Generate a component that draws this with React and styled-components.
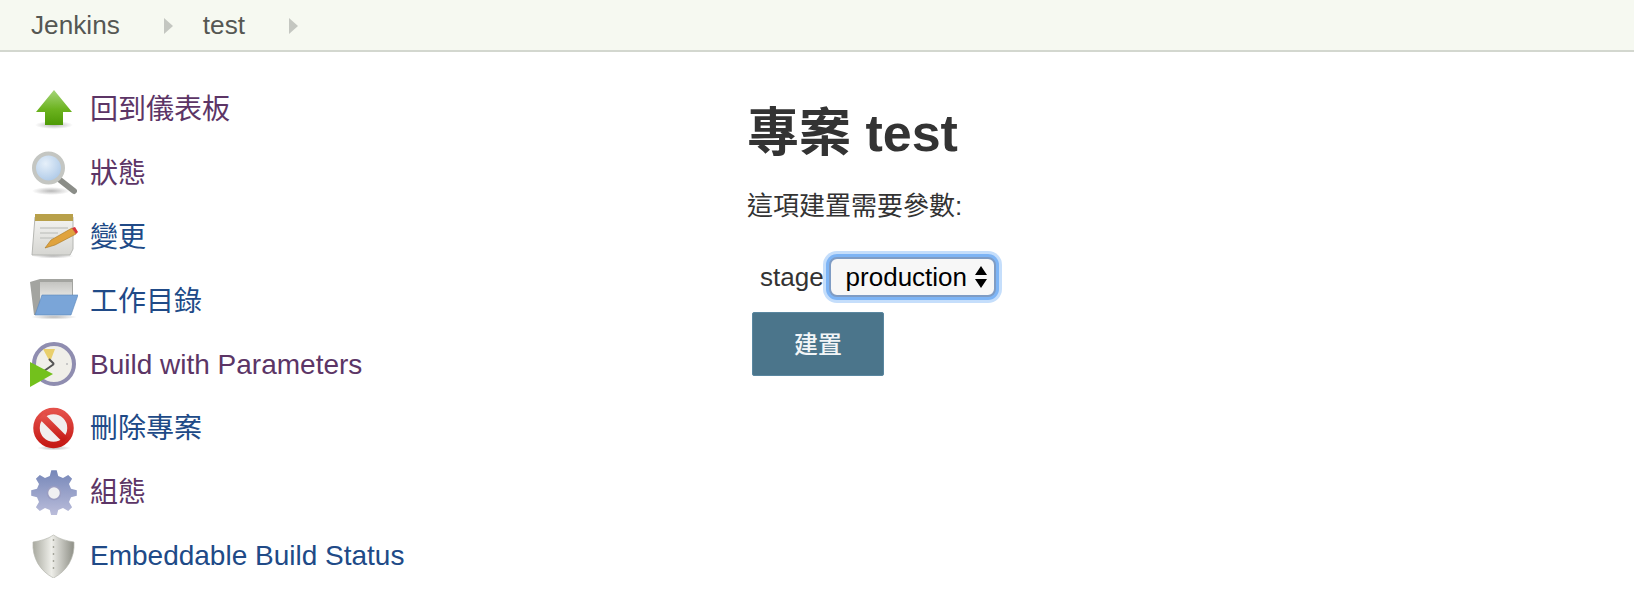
import React from 'react';
import styled, { createGlobalStyle } from 'styled-components';

const FONT = '"Liberation Sans", "Noto Sans CJK TC", sans-serif';

const GlobalStyle = createGlobalStyle`
    html, body {
        margin: 0;
        padding: 0;
        background: #fff;
        overflow: hidden;
    }
    body {
        font-family: ${FONT};
        font-size: 26px;
        color: #333;
    }
`;

const Breadcrumbs = styled.div`
    display: flex;
    align-items: center;
    height: 50px;
    padding-left: 31px;
    background: #f6f9f1;
    border-bottom: 2px solid #d3d7cf;
    color: #555753;
`;

const Crumb = styled.span`
    line-height: 50px;
    margin-right: 44px;
    font-size: 26.2px;
`;

const CrumbArrow = styled.span`
    width: 0;
    height: 0;
    margin-right: 30px;
    margin-top: 2px;
    border-left: 9px solid #c4c7c1;
    border-top: 8px solid transparent;
    border-bottom: 8px solid transparent;
`;

const Layout = styled.div`
    display: flex;
`;

const SidePanel = styled.nav`
    width: 747px;
    padding: 24px 0 0 30px;
    box-sizing: border-box;
`;

const Task = styled.a`
    display: flex;
    align-items: center;
    height: 63.8px;
    font-size: 28px;
    color: ${props => props.$visited ? '#5c3566' : '#204a87'};
    text-decoration: none;
`;

const TaskIcon = styled.svg`
    width: 48px;
    height: 48px;
    flex: none;
    margin-right: 12px;
    filter: blur(0.4px);
`;

// latin labels sit a little lower than the CJK ones in the original font
const TaskLabel = styled.span`
    margin-top: ${props => props.$latin ? '3px' : '-1px'};
`;

const Main = styled.main`
    display: flex;
    flex-direction: column;
    align-items: flex-start;
`;

const Title = styled.h1`
    margin: 49px 0 0;
    font-size: 52px;
    line-height: 64px;
    font-weight: bold;
`;

const Note = styled.p`
    margin: 21px 0 0;
    line-height: 40px;
`;

const ParamRow = styled.div`
    display: flex;
    align-items: center;
    margin: 31px 0 0 13px;
`;

const ParamName = styled.label`
    margin-right: 5px;
`;

const SelectWrap = styled.span`
    position: relative;
    display: block;
    width: 167px;
    height: 40px;
`;

const Select = styled.select`
    display: block;
    width: 100%;
    height: 100%;
    box-sizing: border-box;
    appearance: none;
    margin: 0;
    padding: 0 0 0 15px;
    font-family: ${FONT};
    font-size: 26px;
    color: #000;
    background: #f7f7f7;
    border: 2px solid #7f9cc4;
    border-radius: 8px;
    outline: none;
    box-shadow: 0 0 0 3px #7db4f5, 0 0 0 6px #c5defb;
`;

const SelectArrows = styled.svg`
    position: absolute;
    right: 8px;
    top: 8px;
    width: 14px;
    height: 24px;
    pointer-events: none;
`;

const BuildButton = styled.button`
    width: 132px;
    height: 64px;
    margin: 15px 0 0 5px;
    padding: 0 0 4px;
    font-family: ${FONT};
    font-size: 24px;
    font-weight: 500;
    color: #f2f5f7;
    background: #4b758b;
    border: 1px solid #5a87a0;
    border-radius: 2px;
`;

// builds the gear outline, teeth are simple trapezoids
const gearPath = () => {
    const teeth = 8;
    const pts = [];
    for (let i = 0; i < teeth; i++) {
        const a = (i / teeth) * Math.PI * 2 - Math.PI / 2;
        const step = Math.PI / teeth;
        [[17.5, -0.62], [23, -0.3], [23, 0.3], [17.5, 0.62]].forEach(([r, k]) => {
            const t = a + k * step;
            pts.push(`${(24 + r * Math.cos(t)).toFixed(1)} ${(26 + r * Math.sin(t)).toFixed(1)}`);
        });
    }
    return `M${pts.join(' L')} Z`;
};

const UpIcon = () => (
    <TaskIcon viewBox="0 0 48 48">
        <defs>
            <linearGradient id="upG" x1="0" y1="0" x2="0" y2="1">
                <stop offset="0" stopColor="#a6d57a" />
                <stop offset=".55" stopColor="#6cb31f" />
                <stop offset="1" stopColor="#4e9a06" />
            </linearGradient>
            <radialGradient id="shadowG">
                <stop offset="0" stopColor="#888" stopOpacity=".6" />
                <stop offset="1" stopColor="#888" stopOpacity="0" />
            </radialGradient>
        </defs>
        <ellipse cx="24" cy="41" rx="19" ry="4" fill="url(#shadowG)" />
        <path d="M24 6 L42 28 L33 28 L33 41 L15 41 L15 28 L6 28 Z" fill="url(#upG)" />
    </TaskIcon>
);

const SearchIcon = () => (
    <TaskIcon viewBox="0 0 48 48">
        <defs>
            <radialGradient id="lensG" cx=".4" cy=".35" r=".7">
                <stop offset="0" stopColor="#e6f0fa" />
                <stop offset="1" stopColor="#a9c6e6" />
            </radialGradient>
        </defs>
        <ellipse cx="21" cy="43" rx="19" ry="4" fill="url(#shadowG)" />
        <line x1="30" y1="32" x2="44" y2="43" stroke="#8b8d88" strokeWidth="6" strokeLinecap="round" />
        <circle cx="18.5" cy="20" r="14.5" fill="url(#lensG)" stroke="#c4c6c2" strokeWidth="4" />
    </TaskIcon>
);

const NotepadIcon = () => (
    <TaskIcon viewBox="0 0 48 48">
        <defs>
            <linearGradient id="padG" x1="0" y1="0" x2="0" y2="1">
                <stop offset="0" stopColor="#f4f4f2" />
                <stop offset="1" stopColor="#d6d6d2" />
            </linearGradient>
        </defs>
        <ellipse cx="23" cy="45" rx="21" ry="2.5" fill="url(#shadowG)" />
        <path d="M5 6 H43 V38 L40 44 H2 Z" fill="url(#padG)" stroke="#b5b6b2" />
        <rect x="5" y="3" width="38" height="7" fill="#b8a04a" />
        <path d="M10 17 H38 M10 22 H28 M10 27 H24" stroke="#c8c9c5" strokeWidth="1.6" />
        <path d="M15 37 L21 29 L42 17 L46 23 L25 34 Z" fill="#e0a33e" stroke="#a8761c" strokeWidth=".6" />
        <path d="M42 17 L46 23 L48 21 L45 16 Z" fill="#d8343a" />
    </TaskIcon>
);

const FolderIcon = () => (
    <TaskIcon viewBox="0 0 48 48">
        <defs>
            <linearGradient id="paperG" x1="0" y1="0" x2="0" y2="1">
                <stop offset="0" stopColor="#c4c4c1" />
                <stop offset="1" stopColor="#eeeeec" />
            </linearGradient>
        </defs>
        <ellipse cx="24" cy="42" rx="23" ry="2.5" fill="url(#shadowG)" />
        <path d="M0 7 L10 4 H43 V20 H40 V40 H4 Z" fill="#a3a4a0" />
        <path d="M10 7 H42 V26 H10 Z" fill="url(#paperG)" />
        <path d="M12 20 H48 L41 40 H5 Z" fill="#7aa5d8" stroke="#5b87bb" strokeWidth=".6" />
    </TaskIcon>
);

const ClockIcon = () => (
    <TaskIcon viewBox="0 0 48 48">
        <circle cx="24" cy="25" r="20" fill="#f0efe9" stroke="#8f8db0" strokeWidth="4" />
        <path d="M13 10 L25 10 L20 23 Z" fill="#e9cf6c" />
        <path d="M24 25 L19 20 M24 25 L14 32" stroke="#555" strokeWidth="2" />
        <circle cx="37" cy="25" r="1" fill="#bbb" />
        <path d="M0 23 L23 35 L0 48 Z" fill="#73c11c" />
    </TaskIcon>
);

const NoEntryIcon = () => (
    <TaskIcon viewBox="0 0 48 48">
        <defs>
            <linearGradient id="noG" x1="0" y1="0" x2="0" y2="1">
                <stop offset="0" stopColor="#e4504a" />
                <stop offset="1" stopColor="#c61a15" />
            </linearGradient>
        </defs>
        <ellipse cx="24" cy="45" rx="17" ry="2.5" fill="url(#shadowG)" />
        <circle cx="23.5" cy="25" r="17" fill="#f2eeee" stroke="url(#noG)" strokeWidth="6.5" />
        <line x1="11.5" y1="13" x2="35.5" y2="37" stroke="url(#noG)" strokeWidth="7" />
    </TaskIcon>
);

const GearIcon = () => (
    <TaskIcon viewBox="0 0 48 48">
        <defs>
            <linearGradient id="gearG" x1="0" y1="0" x2="0" y2="1">
                <stop offset="0" stopColor="#7586b8" />
                <stop offset="1" stopColor="#bcbedb" />
            </linearGradient>
        </defs>
        <path d={gearPath()} fill="url(#gearG)" />
        <circle cx="24" cy="26" r="6.5" fill="#f0f0f2" stroke="#9a9dc2" strokeWidth="1.5" />
    </TaskIcon>
);

const ShieldIcon = () => (
    <TaskIcon viewBox="0 0 48 48">
        <defs>
            <linearGradient id="shieldG" x1="0" y1="0" x2="1" y2="0">
                <stop offset="0" stopColor="#a8a99f" />
                <stop offset=".45" stopColor="#eeeee9" />
                <stop offset="1" stopColor="#8e8f86" />
            </linearGradient>
        </defs>
        <path d="M23.5 5 C29 9 37 11 44 12 C45 28 37 41 23.5 48 C10 41 2 28 3 12 C10 11 18 9 23.5 5 Z" fill="url(#shieldG)" stroke="#b5b6ae" strokeWidth=".7" />
        <path d="M23.5 9 V44" stroke="#a5a69c" strokeWidth="1.4" strokeDasharray="2 5" />
    </TaskIcon>
);

const tasks = [
    { label: '回到儀表板', Icon: UpIcon, visited: true },
    { label: '狀態', Icon: SearchIcon, visited: true },
    { label: '變更', Icon: NotepadIcon, visited: false },
    { label: '工作目錄', Icon: FolderIcon, visited: false },
    { label: 'Build with Parameters', Icon: ClockIcon, visited: true, latin: true },
    { label: '刪除專案', Icon: NoEntryIcon, visited: false },
    { label: '組態', Icon: GearIcon, visited: true },
    { label: 'Embeddable Build Status', Icon: ShieldIcon, visited: false, latin: true },
];

export default function App() {
    return (
        <>
            <GlobalStyle />
            <Breadcrumbs>
                <Crumb>Jenkins</Crumb>
                <CrumbArrow />
                <Crumb>test</Crumb>
                <CrumbArrow />
            </Breadcrumbs>
            <Layout>
                <SidePanel>
                    {tasks.map(({ label, Icon, visited, latin }) => (
                        <Task href="#" key={label} $visited={visited}>
                            <Icon />
                            <TaskLabel $latin={latin}>{label}</TaskLabel>
                        </Task>
                    ))}
                </SidePanel>
                <Main>
                    <Title>專案 test</Title>
                    <Note>這項建置需要參數:</Note>
                    <ParamRow>
                        <ParamName htmlFor="stage">stage</ParamName>
                        <SelectWrap>
                            <Select id="stage" defaultValue="production">
                                <option value="production">production</option>
                            </Select>
                            <SelectArrows viewBox="0 0 14 24">
                                <path d="M7 1 L13 10 H1 Z M1 14 H13 L7 23 Z" fill="#000" />
                            </SelectArrows>
                        </SelectWrap>
                    </ParamRow>
                    <BuildButton>建置</BuildButton>
                </Main>
            </Layout>
        </>
    );
}
